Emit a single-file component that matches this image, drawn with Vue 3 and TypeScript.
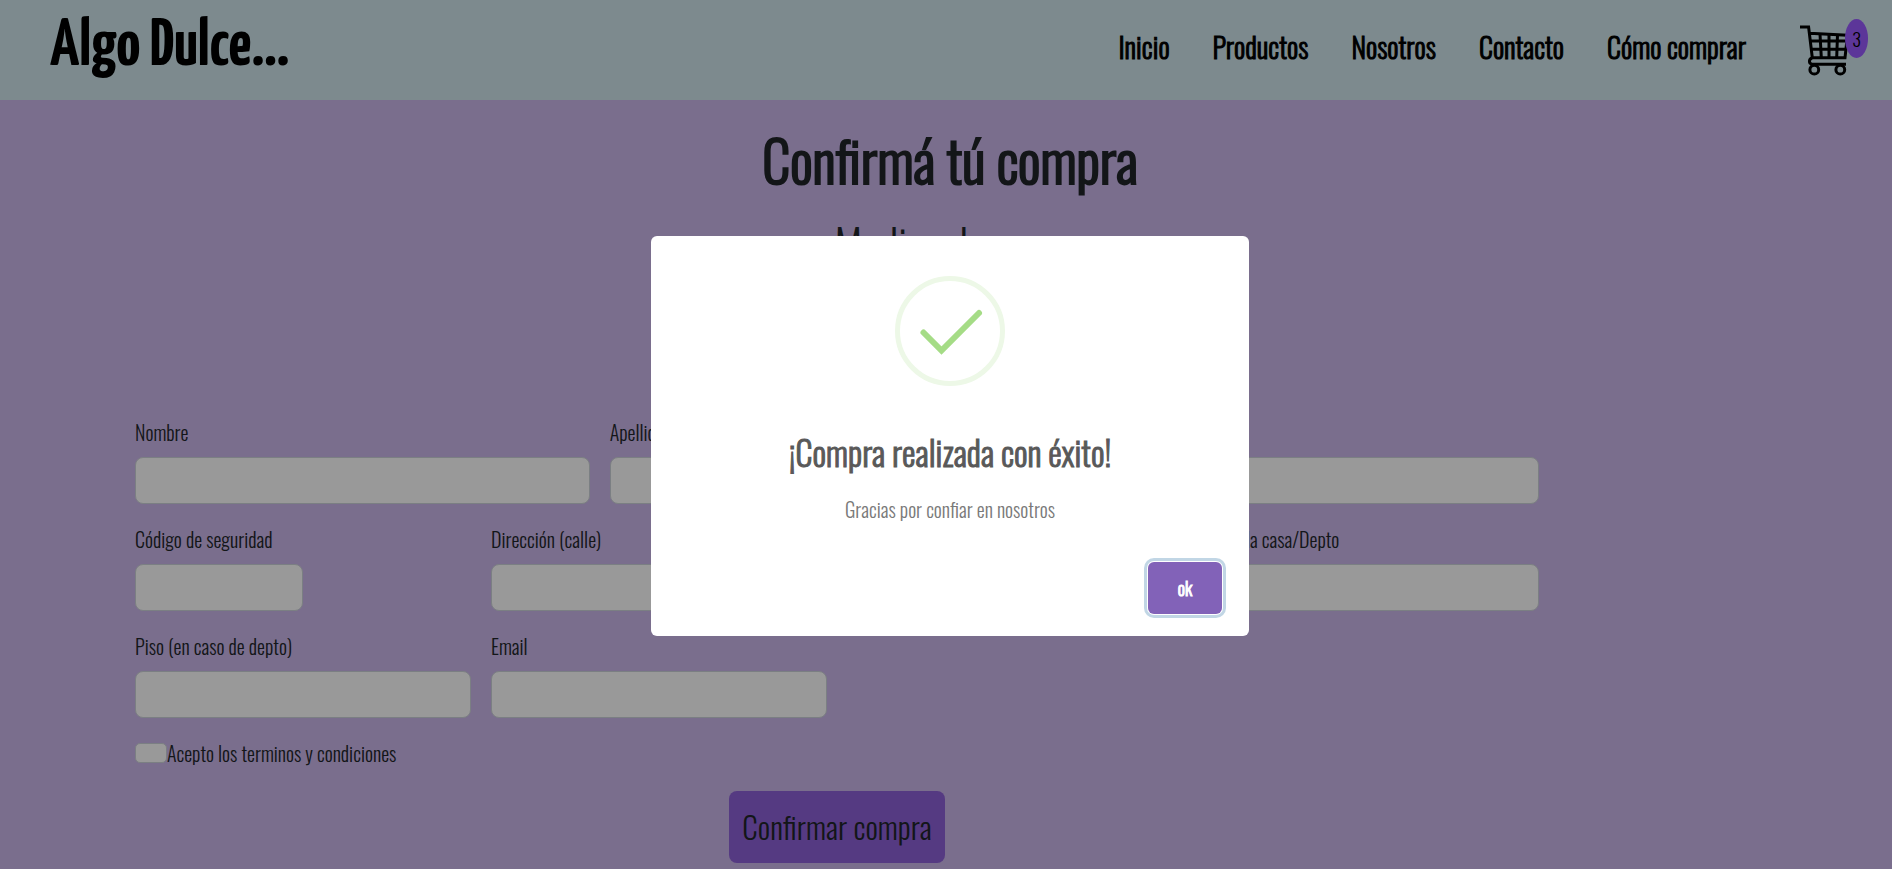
<script setup lang="ts">
interface Field {
  id: string
  label: string
  type: string
  size: string
}

const links: string[] = ['Inicio', 'Productos', 'Nosotros', 'Contacto', 'Cómo comprar']

const fields: Field[] = [
  { id: 'nombre', label: 'Nombre', type: 'text', size: 'third' },
  { id: 'apellido', label: 'Apellido', type: 'text', size: 'third' },
  { id: 'tarjeta', label: '', type: 'text', size: 'third' },
  { id: 'codigo', label: 'Código de seguridad', type: 'text', size: 'quarter short' },
  { id: 'calle', label: 'Dirección (calle)', type: 'text', size: 'half' },
  { id: 'numero', label: 'N° de la casa/Depto', type: 'text', size: 'quarter' },
  { id: 'piso', label: 'Piso (en caso de depto)', type: 'text', size: 'quarter' },
  { id: 'email', label: 'Email', type: 'email', size: 'quarter' },
]
</script>

<template>
  <div class="page">
    <header class="header">
      <a class="logo" href="#">Algo Dulce...</a>
      <div class="menu">
        <nav class="nav">
          <a v-for="link in links" :key="link" class="nav-link" href="#">{{ link }}</a>
        </nav>
        <a class="cart" href="#" aria-label="Carrito">
          <svg class="cart-icon" viewBox="0 0 48 52" width="48" height="52" fill="none" stroke="#000" stroke-width="3">
            <path d="M0 3H8.6L12.3 33.7H45L47.5 11.3L9.3 9.3" />
            <path d="M10.2 17H47M11.2 25.3H46M20 10L21.3 33.7M29 10.3V33.7M37.5 10.7L36.7 33.7" />
            <path d="M12 34C8.6 35.2 8.6 39.6 12 40.3H46" />
            <circle cx="14.3" cy="45.7" r="4.4" />
            <circle cx="40.3" cy="45.7" r="4.4" />
          </svg>
          <span class="badge">3</span>
        </a>
      </div>
    </header>

    <main class="content">
      <h1 class="title">Confirmá tú compra</h1>
      <h2 class="subtitle">Medios de pago</h2>
      <form class="form" @submit.prevent>
        <div v-for="field in fields" :key="field.id" class="field" :class="field.size">
          <label v-if="field.label" class="label" :for="field.id">{{ field.label }}</label>
          <input :id="field.id" class="input" :type="field.type" :aria-label="field.label || field.id" />
        </div>
        <div class="terms">
          <input id="terminos" class="check" type="checkbox" />
          <label for="terminos">Acepto los terminos y condiciones</label>
        </div>
        <button class="confirm" type="submit">Confirmar compra</button>
      </form>
    </main>

    <div class="overlay">
      <section class="modal" role="dialog" aria-modal="true" aria-labelledby="modal-title">
        <svg class="success" viewBox="0 0 110 110" width="110" height="110" fill="none">
          <circle cx="55" cy="55" r="52.5" stroke="#edf8e7" stroke-width="5" />
          <path d="M28.5 56.5L46.5 74.5L84 37" stroke="#a5dc86" stroke-width="6" stroke-linecap="round" />
        </svg>
        <h2 id="modal-title" class="modal-title">¡Compra realizada con éxito!</h2>
        <p class="modal-text">Gracias por confiar en nosotros</p>
        <div class="modal-footer">
          <button class="ok" type="button">ok</button>
        </div>
      </section>
    </div>
  </div>
</template>

<style>
body {
  margin: 0;
  background: #cbb7eb;
}
</style>

<style scoped>
.page {
  height: 100vh;
  overflow: hidden;
  color: #212529;
  font-family: Oswald, "Roboto Condensed", "Liberation Sans Narrow", "Liberation Sans", sans-serif;
  font-size: 20px;
  font-weight: 300;
  line-height: 30px;
}

.page * {
  box-sizing: border-box;
}

.header {
  display: flex;
  align-items: center;
  justify-content: space-between;
  height: 100px;
  padding: 0 44px 0 50px;
  background: #d0e6ed;
}

.logo {
  padding-bottom: 6px;
  color: #000;
  font-family: "Yanone Kaffeesatz", Oswald, "Liberation Sans Narrow", "Liberation Sans", sans-serif;
  font-size: 67px;
  font-weight: 700;
  line-height: 60px;
  text-decoration: none;
}

.menu {
  display: flex;
  align-items: center;
  gap: 54px;
}

.nav {
  display: flex;
  gap: 43px;
}

.nav-link {
  padding-bottom: 6px;
  color: #000;
  font-size: 28px;
  line-height: 36px;
  text-decoration: none;
  -webkit-text-stroke: 1px currentColor;
}

.cart {
  position: relative;
  display: block;
}

.cart-icon {
  display: block;
}

.badge {
  position: absolute;
  top: -5px;
  right: -20px;
  width: 23px;
  height: 39px;
  border-radius: 50%;
  background: #995aff;
  color: #000;
  font-size: 18px;
  line-height: 40px;
  text-align: center;
}

.content {
  padding: 27px 0 0 8px;
}

.title {
  margin: 0;
  font-size: 56px;
  font-weight: 300;
  line-height: 64px;
  text-align: center;
  -webkit-text-stroke: 2px currentColor;
}

.subtitle {
  margin: 25px 0 0;
  font-size: 44px;
  font-weight: 300;
  line-height: 56px;
  text-align: center;
}

.form {
  display: grid;
  grid-template-columns: repeat(12, 1fr);
  gap: 20px;
  margin: 145px 353px 0 127px;
}

.field {
  display: flex;
  flex-direction: column;
  justify-content: flex-end;
  gap: 10px;
}

.third {
  grid-column: span 4;
}

.quarter {
  grid-column: span 3;
}

.half {
  grid-column: span 6;
}

.short .input {
  width: 50%;
}

.label {
  white-space: nowrap;
}

.input {
  width: 100%;
  height: 47px;
  padding: 8px 15px;
  border: 1px solid #ced4da;
  border-radius: 8px;
  background: #fff;
  font: inherit;
}

.terms {
  display: flex;
  grid-column: 1 / -1;
  align-items: center;
}

.check {
  width: 32px;
  height: 20px;
  margin: 0;
  border: 1px solid #ced4da;
  border-radius: 5px;
  background: #fff;
  appearance: none;
}

.confirm {
  grid-column: 1 / -1;
  justify-self: center;
  height: 72px;
  margin-top: 3px;
  padding: 0 13px 2px;
  border: 0;
  border-radius: 8px;
  background: #8e61d9;
  color: #212529;
  font-family: inherit;
  font-size: 31px;
  font-weight: 300;
}

.overlay {
  position: fixed;
  inset: 0;
  display: flex;
  align-items: center;
  justify-content: center;
  padding: 3px 0 0 8px;
  background: rgba(0, 0, 0, 0.4);
}

.modal {
  display: flex;
  flex-direction: column;
  align-items: center;
  width: 598px;
  height: 400px;
  padding: 40px 27px 22px;
  border-radius: 6px;
  background: #fff;
}

.modal-title {
  margin: 41px 0 0;
  color: #595959;
  font-size: 34px;
  font-weight: 300;
  line-height: 50px;
  -webkit-text-stroke: 1px currentColor;
}

.modal-text {
  margin: 17px 0 0;
  color: #797979;
}

.modal-footer {
  align-self: flex-end;
  margin-top: auto;
}

.ok {
  display: block;
  width: 74px;
  height: 52px;
  padding: 0;
  border: 0;
  border-radius: 6px;
  background: #8262b8;
  box-shadow: 0 0 0 1px #fff, 0 0 0 4px rgba(43, 114, 165, 0.29);
  color: #fff;
  font-family: inherit;
  font-size: 18px;
  font-weight: 300;
  -webkit-text-stroke: 1px currentColor;
}
</style>
